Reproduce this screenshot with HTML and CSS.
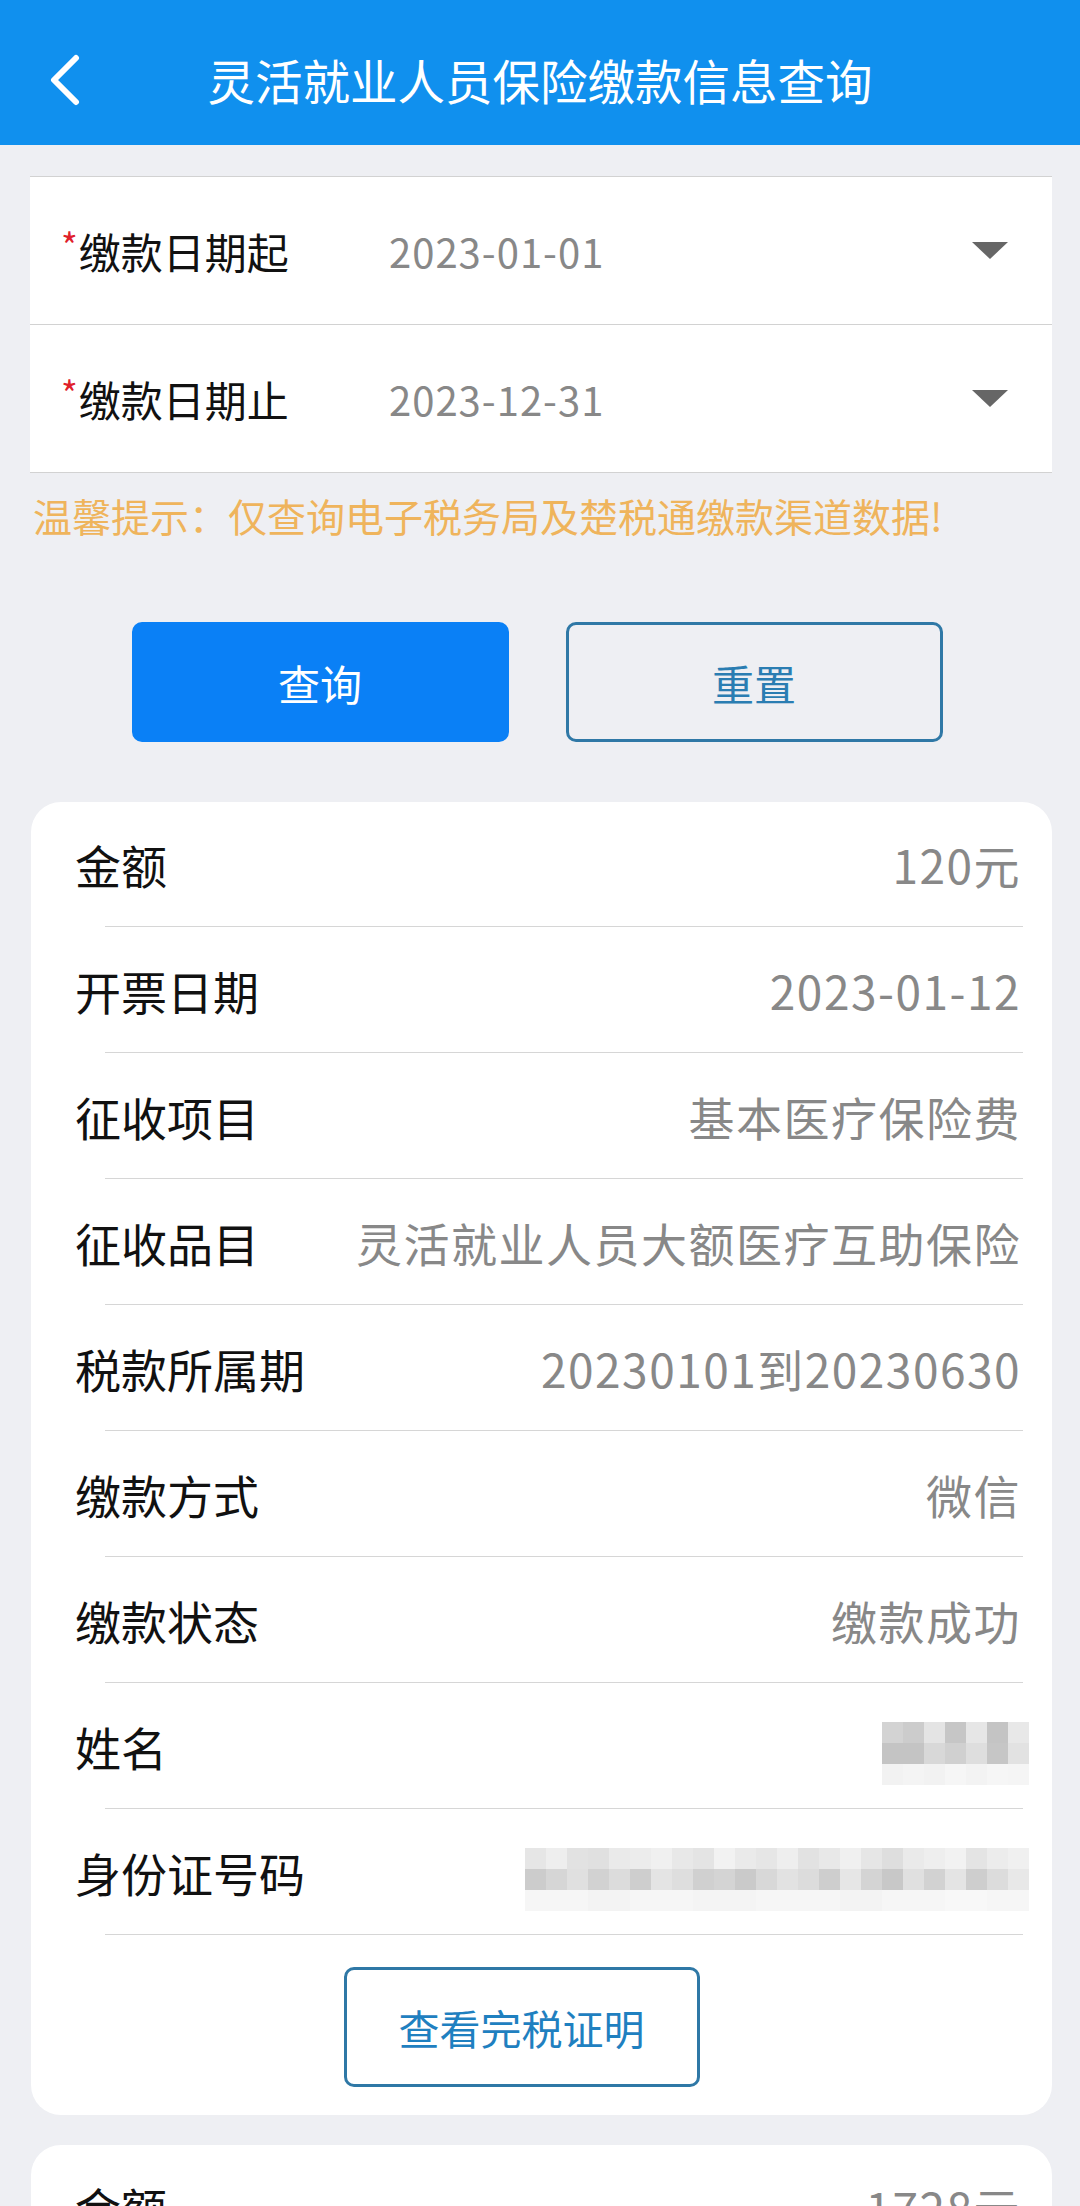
FILE: index.html
```html
<!DOCTYPE html>
<html lang="zh-CN">
<head>
<meta charset="UTF-8" />
<meta name="viewport" content="width=device-width, initial-scale=1" />
<title>灵活就业人员保险缴款信息查询</title>
<link rel="stylesheet" href="styles.css">
</head>
<body>
  <header class="topbar">
    <div class="back">
      <svg width="34" height="52" viewBox="0 0 34 52" aria-hidden="true">
        <polyline points="27,4 5,26 27,48" fill="none" stroke="#fff" stroke-width="6" stroke-linecap="round" stroke-linejoin="round" />
      </svg>
    </div>
    <h1>灵活就业人员保险缴款信息查询</h1>
    <div></div>
  </header>

  <div class="form">
    <div class="form-row">
      <div class="form-label"><span class="req">*</span>缴款日期起</div>
      <div class="form-value">2023-01-01</div>
      <span class="caret"></span>
    </div>
    <div class="form-row">
      <div class="form-label"><span class="req">*</span>缴款日期止</div>
      <div class="form-value">2023-12-31</div>
      <span class="caret"></span>
    </div>
  </div>

  <p class="tip">温馨提示：仅查询电子税务局及楚税通缴款渠道数据!</p>

  <div class="actions">
    <button class="btn btn-primary">查询</button>
    <button class="btn btn-outline">重置</button>
  </div>

  <div class="card">
    <div class="row"><span class="k">金额</span><span class="v">120元</span></div>
    <div class="line"></div>
    <div class="row"><span class="k">开票日期</span><span class="v">2023-01-12</span></div>
    <div class="line"></div>
    <div class="row"><span class="k">征收项目</span><span class="v">基本医疗保险费</span></div>
    <div class="line"></div>
    <div class="row"><span class="k">征收品目</span><span class="v">灵活就业人员大额医疗互助保险</span></div>
    <div class="line"></div>
    <div class="row"><span class="k">税款所属期</span><span class="v">20230101到20230630</span></div>
    <div class="line"></div>
    <div class="row"><span class="k">缴款方式</span><span class="v">微信</span></div>
    <div class="line"></div>
    <div class="row"><span class="k">缴款状态</span><span class="v">缴款成功</span></div>
    <div class="line"></div>
    <div class="row">
      <span class="k">姓名</span>
      <svg class="blur" width="147" height="63" viewBox="0 0 147 63" aria-label="已隐藏">
        <rect x="0" y="0" width="21" height="21" fill="#d3d3d3"/><rect x="21" y="0" width="21" height="21" fill="#cccccc"/><rect x="42" y="0" width="21" height="21" fill="#e4e4e4"/><rect x="63" y="0" width="21" height="21" fill="#c6c6c6"/><rect x="84" y="0" width="21" height="21" fill="#e6e6e6"/><rect x="105" y="0" width="21" height="21" fill="#c4c4c4"/><rect x="126" y="0" width="21" height="21" fill="#e8e8e8"/>
        <rect x="0" y="21" width="21" height="21" fill="#c4c4c4"/><rect x="21" y="21" width="21" height="21" fill="#c4c4c4"/><rect x="42" y="21" width="21" height="21" fill="#d8d8d8"/><rect x="63" y="21" width="21" height="21" fill="#d0d0d0"/><rect x="84" y="21" width="21" height="21" fill="#dedede"/><rect x="105" y="21" width="21" height="21" fill="#c6c6c6"/><rect x="126" y="21" width="21" height="21" fill="#e2e2e2"/>
        <rect x="0" y="42" width="21" height="21" fill="#f2f2f2"/><rect x="21" y="42" width="21" height="21" fill="#f4f4f4"/><rect x="42" y="42" width="21" height="21" fill="#f2f2f2"/><rect x="63" y="42" width="21" height="21" fill="#f6f6f6"/><rect x="84" y="42" width="21" height="21" fill="#f3f3f3"/><rect x="105" y="42" width="21" height="21" fill="#f6f6f6"/><rect x="126" y="42" width="21" height="21" fill="#f5f5f5"/>
      </svg>
    </div>
    <div class="line"></div>
    <div class="row">
      <span class="k">身份证号码</span>
      <svg class="blur" width="504" height="63" viewBox="0 0 504 63" aria-label="已隐藏">
        <rect x="0" y="0" width="21" height="21" fill="#e6e6e6"/><rect x="21" y="0" width="21" height="21" fill="#eeeeee"/><rect x="42" y="0" width="21" height="21" fill="#e2e2e2"/><rect x="63" y="0" width="21" height="21" fill="#e0e0e0"/><rect x="84" y="0" width="21" height="21" fill="#eaeaea"/><rect x="105" y="0" width="21" height="21" fill="#ececec"/><rect x="126" y="0" width="21" height="21" fill="#f0f0f0"/><rect x="147" y="0" width="21" height="21" fill="#e8e8e8"/><rect x="168" y="0" width="21" height="21" fill="#e4e4e4"/><rect x="189" y="0" width="21" height="21" fill="#f2f2f2"/><rect x="210" y="0" width="21" height="21" fill="#eaeaea"/><rect x="231" y="0" width="21" height="21" fill="#e6e6e6"/><rect x="252" y="0" width="21" height="21" fill="#eeeeee"/><rect x="273" y="0" width="21" height="21" fill="#e2e2e2"/><rect x="294" y="0" width="21" height="21" fill="#e8e8e8"/><rect x="315" y="0" width="21" height="21" fill="#f0f0f0"/><rect x="336" y="0" width="21" height="21" fill="#e6e6e6"/><rect x="357" y="0" width="21" height="21" fill="#dedede"/><rect x="378" y="0" width="21" height="21" fill="#eaeaea"/><rect x="399" y="0" width="21" height="21" fill="#eeeeee"/><rect x="420" y="0" width="21" height="21" fill="#f2f2f2"/><rect x="441" y="0" width="21" height="21" fill="#e4e4e4"/><rect x="462" y="0" width="21" height="21" fill="#ececec"/><rect x="483" y="0" width="21" height="21" fill="#f0f0f0"/>
        <rect x="0" y="21" width="21" height="21" fill="#cccccc"/><rect x="21" y="21" width="21" height="21" fill="#d6d6d6"/><rect x="42" y="21" width="21" height="21" fill="#e0e0e0"/><rect x="63" y="21" width="21" height="21" fill="#d2d2d2"/><rect x="84" y="21" width="21" height="21" fill="#dcdcdc"/><rect x="105" y="21" width="21" height="21" fill="#cecece"/><rect x="126" y="21" width="21" height="21" fill="#e4e4e4"/><rect x="147" y="21" width="21" height="21" fill="#dedede"/><rect x="168" y="21" width="21" height="21" fill="#d0d0d0"/><rect x="189" y="21" width="21" height="21" fill="#d4d4d4"/><rect x="210" y="21" width="21" height="21" fill="#cacaca"/><rect x="231" y="21" width="21" height="21" fill="#d8d8d8"/><rect x="252" y="21" width="21" height="21" fill="#e2e2e2"/><rect x="273" y="21" width="21" height="21" fill="#dcdcdc"/><rect x="294" y="21" width="21" height="21" fill="#cecece"/><rect x="315" y="21" width="21" height="21" fill="#e6e6e6"/><rect x="336" y="21" width="21" height="21" fill="#d4d4d4"/><rect x="357" y="21" width="21" height="21" fill="#c8c8c8"/><rect x="378" y="21" width="21" height="21" fill="#e0e0e0"/><rect x="399" y="21" width="21" height="21" fill="#d2d2d2"/><rect x="420" y="21" width="21" height="21" fill="#e4e4e4"/><rect x="441" y="21" width="21" height="21" fill="#cecece"/><rect x="462" y="21" width="21" height="21" fill="#dcdcdc"/><rect x="483" y="21" width="21" height="21" fill="#e8e8e8"/>
        <rect x="0" y="42" width="504" height="21" fill="#f6f6f6"/><rect x="63" y="42" width="42" height="21" fill="#f3f3f3"/><rect x="168" y="42" width="63" height="21" fill="#f4f4f4"/><rect x="315" y="42" width="42" height="21" fill="#f3f3f3"/><rect x="420" y="42" width="42" height="21" fill="#f8f8f8"/>
      </svg>
    </div>
    <div class="line"></div>
    <div class="card-foot">
      <button class="btn btn-outline btn-cert">查看完税证明</button>
    </div>
  </div>

  <div class="card">
    <div class="row"><span class="k">金额</span><span class="v">1728元</span></div>
  </div>
</body>
</html>
```

FILE: styles.css
```css
body {
  margin: 0;
  background: #eeeff3;
  font-family: "Noto Sans CJK SC", "Noto Sans", sans-serif;
  color: #111;
}
.topbar {
  height: 145px;
  box-sizing: border-box;
  padding-top: 14px;
  background: #1090ee;
  display: grid;
  grid-template-columns: 1fr auto 1fr;
  align-items: center;
}
.back {
  padding-left: 49px;
  display: flex;
  align-items: center;
}
.topbar h1 {
  margin: 0;
  font-size: 47.5px;
  font-weight: 400;
  color: #fff;
  line-height: 60px;
}
.form {
  margin: 31px 28px 0 30px;
  background: #fff;
  border-top: 1px solid #d2d2d2;
  border-bottom: 1px solid #d2d2d2;
}
.form-row {
  height: 147px;
  display: flex;
  align-items: center;
  padding-right: 44px;
}
.form-row + .form-row {
  border-top: 1px solid #d2d2d2;
}
.form-label {
  width: 359px;
  box-sizing: border-box;
  padding-left: 31px;
  font-size: 42px;
  color: #111;
  display: flex;
  align-items: center;
}
.req {
  color: #e0202a;
  font-size: 36px;
  line-height: 36px;
  margin-right: 1px;
  align-self: flex-start;
  margin-top: 6px;
}
.form-value {
  flex: 1;
  font-size: 40px;
  color: #888;
  letter-spacing: 1px;
}
.caret {
  width: 0;
  height: 0;
  border-left: 18px solid transparent;
  border-right: 18px solid transparent;
  border-top: 17px solid #666;
}
.tip {
  margin: 17px 0 0;
  padding-left: 33px;
  font-size: 39px;
  line-height: 50px;
  color: #efb45c;
}
.actions {
  margin-top: 82px;
  display: flex;
  justify-content: center;
  gap: 57px;
  padding-right: 6px;
}
.btn {
  font-family: "Noto Sans CJK SC", "Noto Sans", sans-serif;
  font-size: 42px;
  border-radius: 10px;
  cursor: pointer;
}
.actions .btn {
  width: 377px;
  height: 120px;
}
.btn-primary {
  background: #0a80f6;
  color: #fff;
  border: 3px solid #0a80f6;
}
.btn-outline {
  background: transparent;
  color: #2a7db2;
  border: 3px solid #2f78a6;
}
.card {
  margin: 60px 28px 0 31px;
  background: #fff;
  border-radius: 30px;
}
.card + .card {
  margin-top: 30px;
}
.row {
  height: 125px;
  display: flex;
  align-items: center;
  justify-content: space-between;
  padding: 0 31px 0 44px;
}
.card > .row:first-child {
  height: 124px;
}
.k {
  font-size: 46px;
  color: #111;
}
.v {
  font-size: 46px;
  color: #888;
  letter-spacing: 1.5px;
}
.line {
  height: 1px;
  background: #d6d6d6;
  margin: 0 29px 0 74px;
}
.blur {
  display: block;
  margin-right: -8px;
  margin-top: 16px;
}
.card-foot {
  display: flex;
  justify-content: center;
  padding: 32px 40px 28px 0;
}
.btn-cert {
  width: 356px;
  height: 120px;
  font-size: 41px;
  color: #1f80c0;
  background: #fff;
}
```
